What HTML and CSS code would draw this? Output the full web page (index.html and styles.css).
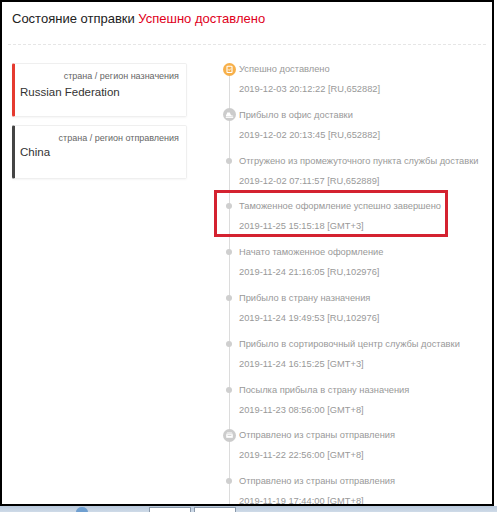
FILE: index.html
```html
<!DOCTYPE html>
<html lang="ru">
<head>
<meta charset="utf-8">
<title>Состояние отправки</title>
<link rel="stylesheet" href="styles.css">
</head>
<body>
<div class="frame">
  <div class="header">Состояние отправки <span class="status">Успешно доставлено</span></div>
  <div class="content">
    <div class="cards">
      <div class="card card-dest">
        <div class="card-label">страна / регион назначения</div>
        <div class="card-name">Russian Federation</div>
      </div>
      <div class="card card-orig">
        <div class="card-label">страна / регион отправления</div>
        <div class="card-name">China</div>
      </div>
    </div>
    <div class="timeline">
      <div class="item">
        <span class="icon icon-orange"><svg viewBox="0 0 13 13" width="13" height="13"><rect x="4" y="3.2" width="5" height="6.3" rx="0.6" fill="none" stroke="#fff" stroke-width="1.1"/><path d="M5.2 6.4l1 1 1.7-1.9" fill="none" stroke="#fff" stroke-width="0.9"/></svg></span>
        <div class="title">Успешно доставлено</div>
        <div class="date">2019-12-03 20:12:22 [RU,652882]</div>
      </div>
      <div class="item">
        <span class="icon icon-gray"><svg viewBox="0 0 13 13" width="13" height="13"><path d="M3 8.6h7.2v-0.8l-2.2-0.6-1.2-2.6h-2.6l-0.8 2.2H3z" fill="#fff"/><rect x="2.8" y="9" width="7.4" height="0.9" fill="#fff"/></svg></span>
        <div class="title">Прибыло в офис доставки</div>
        <div class="date">2019-12-02 20:13:45 [RU,652882]</div>
      </div>
      <div class="item">
        <span class="dot"></span>
        <div class="title">Отгружено из промежуточного пункта службы доставки</div>
        <div class="date">2019-12-02 07:11:57 [RU,652889]</div>
      </div>
      <div class="item">
        <span class="dot"></span>
        <div class="title">Таможенное оформление успешно завершено</div>
        <div class="date">2019-11-25 15:15:18 [GMT+3]</div>
        <div class="highlight"></div>
      </div>
      <div class="item">
        <span class="dot"></span>
        <div class="title">Начато таможенное оформление</div>
        <div class="date">2019-11-24 21:16:05 [RU,102976]</div>
      </div>
      <div class="item">
        <span class="dot"></span>
        <div class="title">Прибыло в страну назначения</div>
        <div class="date">2019-11-24 19:49:53 [RU,102976]</div>
      </div>
      <div class="item">
        <span class="dot"></span>
        <div class="title">Прибыло в сортировочный центр службы доставки</div>
        <div class="date">2019-11-24 16:15:25 [GMT+3]</div>
      </div>
      <div class="item">
        <span class="dot"></span>
        <div class="title">Посылка прибыла в страну назначения</div>
        <div class="date">2019-11-23 08:56:00 [GMT+8]</div>
      </div>
      <div class="item">
        <span class="icon icon-gray"><svg viewBox="0 0 13 13" width="13" height="13"><path d="M3.2 5.2h6.6v3.6H3.2z" fill="#fff"/><path d="M3.2 4.6l1-1h4.6l1 1z" fill="#fff"/><rect x="4.6" y="6.2" width="3.8" height="0.8" fill="#ccc"/></svg></span>
        <div class="title">Отправлено из страны отправления</div>
        <div class="date">2019-11-22 22:56:00 [GMT+8]</div>
      </div>
      <div class="item">
        <span class="dot"></span>
        <div class="title">Отправлено из страны отправления</div>
        <div class="date">2019-11-19 17:44:00 [GMT+8]</div>
      </div>
    </div>
  </div>
</div>
<div class="taskbar">
  <span class="orb"></span>
  <span class="tab tab-first"></span>
  <span class="tab"></span>
</div>
</body>
</html>
```
FILE: styles.css
```css
html, body {
  margin: 0;
  padding: 0;
  background: #fff;
}
body {
  width: 497px;
  height: 512px;
  overflow: hidden;
  font-family: "Liberation Sans", Arial, sans-serif;
}
.frame {
  width: 494px;
  height: 506px;
  box-sizing: border-box;
  border: 2px solid #000;
  overflow: hidden;
  background: #fff;
}
.header {
  margin: 0 6px;
  padding: 6px 0 14px 4px;
  line-height: 22px;
  font-size: 13px;
  color: #222;
  border-bottom: 1px dashed #e6e6e6;
}
.status {
  color: #e0001b;
}
.content {
  display: flex;
  padding: 17px 0 0 10px;
}
.cards {
  width: 175px;
  margin-top: 1px;
  display: flex;
  flex-direction: column;
  gap: 8px;
}
.card {
  height: 54px;
  box-sizing: border-box;
  border: 1px solid #efefef;
  border-left: 3px solid #e53a2f;
  border-radius: 2px;
  padding: 5px 7px 0 5px;
  box-shadow: 0 1px 2px rgba(0,0,0,0.04);
}
.card-orig {
  border-left-color: #444;
}
.card-label {
  text-align: right;
  font-size: 9px;
  line-height: 14px;
  color: #666;
}
.card-name {
  margin-top: -1px;
  font-size: 11.5px;
  line-height: 20px;
  color: #333;
}
.card-orig .card-name {
  margin-top: -3px;
}
.timeline {
  position: relative;
  margin-left: 37px;
  padding-left: 15px;
  flex: 1;
}
.timeline::before {
  content: "";
  position: absolute;
  left: 5px;
  top: 7px;
  bottom: -60px;
  width: 1px;
  background: #dcdcdc;
}
.item {
  position: relative;
  padding-bottom: 11.8px;
  font-size: 9.3px;
  color: #999;
}
.title {
  line-height: 14px;
}
.date {
  margin-top: 6px;
  line-height: 14px;
}
.dot {
  position: absolute;
  left: -13px;
  top: 4px;
  width: 6px;
  height: 6px;
  border-radius: 50%;
  background: #cfcfcf;
}
.icon {
  position: absolute;
  left: -16.5px;
  top: 0.5px;
  width: 13px;
  height: 13px;
  border-radius: 50%;
  display: block;
}
.icon svg {
  display: block;
}
.icon-orange {
  background: #f7b04a;
}
.icon-gray {
  background: #cccccc;
}
.highlight {
  position: absolute;
  left: -25px;
  top: -9px;
  width: 234px;
  height: 47px;
  box-sizing: border-box;
  border: 3px solid #d42230;
}
.taskbar {
  position: relative;
  height: 6px;
  background: linear-gradient(#b9c9dc, #cfdbe8);
  display: flex;
  align-items: flex-end;
}
.orb {
  position: absolute;
  left: 76px;
  top: 1px;
  width: 12px;
  height: 10px;
  border-radius: 50%;
  background: #6f9fd0;
}
.tab {
  height: 5px;
  width: 42px;
  box-sizing: border-box;
  border: 1px solid #8a99aa;
  border-bottom: none;
  background: #fff;
  margin-left: 3px;
}
.tab-first {
  margin-left: 149px;
}
```
